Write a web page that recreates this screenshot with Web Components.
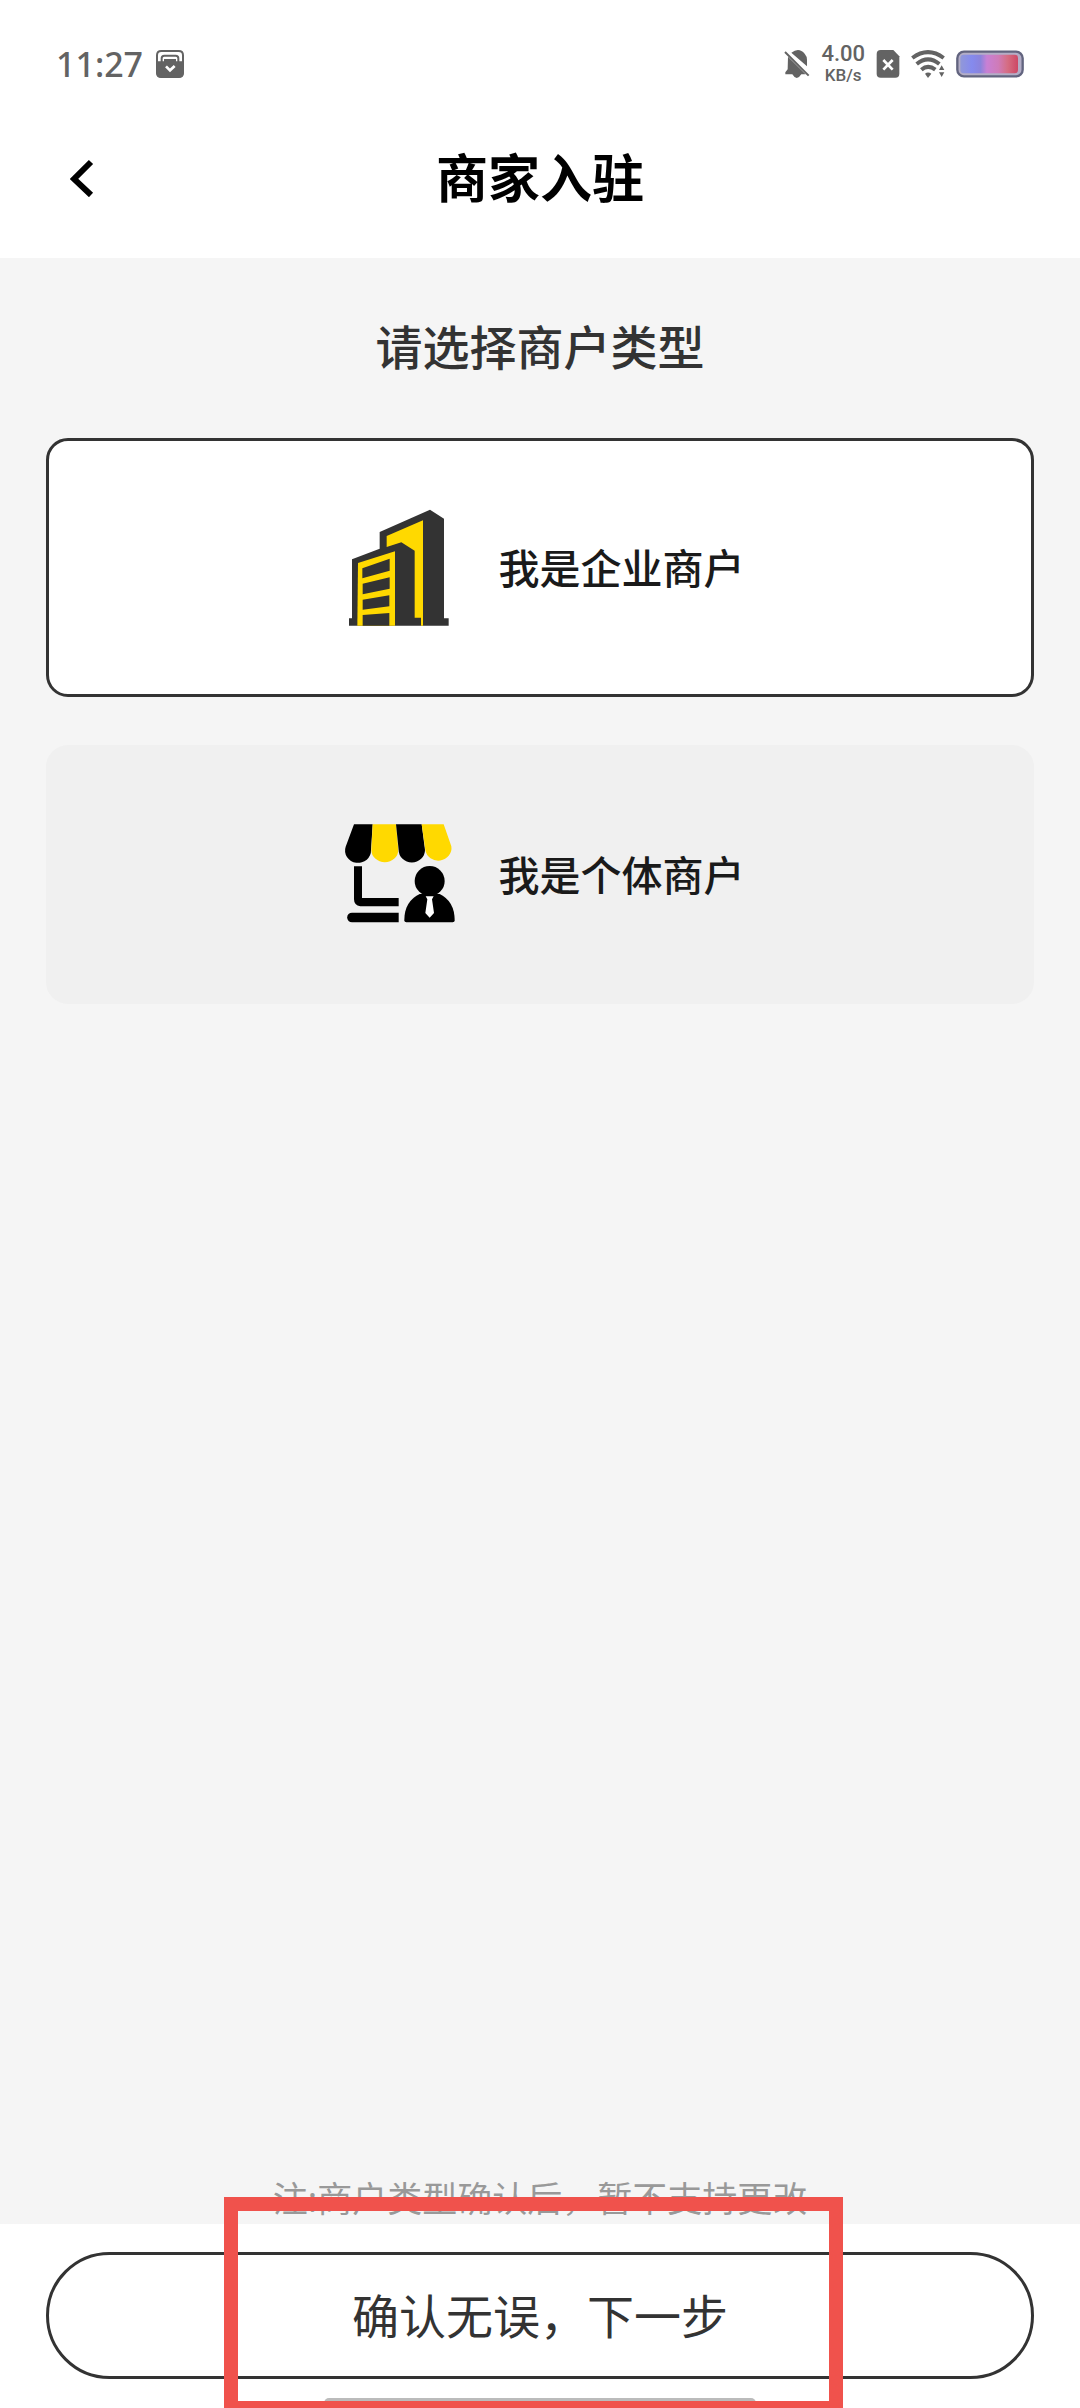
<!DOCTYPE html>
<html lang="zh-CN">
<head>
<meta charset="utf-8">
<meta name="viewport" content="width=device-width, initial-scale=1">
<title>商家入驻</title>
<style>
  body {
    margin: 0;
    font-family: "Noto Sans", "Noto Sans CJK SC", sans-serif;
    color: #333;
    background-color: #fff;
  }
</style>
</head>
<body>
<merchant-application></merchant-application>

<script>
/**
 * The status-bar web component.
 */
const statusTemplate = document.createElement('template')
statusTemplate.innerHTML = `
  <style>
    :host {
      display: flex;
      align-items: center;
      justify-content: space-between;
      box-sizing: border-box;
      height: 128px;
      padding: 0 56px;
      color: #636363;
      font-weight: 500;
    }
    .group {
      display: flex;
      align-items: center;
      gap: 11px;
    }
    .time {
      font-size: 34px;
      line-height: 40px;
      margin-right: 2px;
    }
    .speed {
      display: grid;
      justify-items: center;
      font-family: Roboto, sans-serif;
      font-size: 22px;
      line-height: 22px;
      font-weight: 500;
    }
    .speed small {
      font-size: 17px;
      line-height: 20px;
    }
    svg {
      display: block;
      fill: currentColor;
    }
  </style>
  <div class="group">
    <span class="time">11:27</span>
    <svg width="28" height="28" viewBox="0 0 84 84" aria-hidden="true">
      <path d="M16 3H68Q81 3 81 16V70Q81 81 68 81H16Q3 81 3 70V16Q3 3 16 3Z" fill="none" stroke="currentColor" stroke-width="6"/>
      <path d="M17 36V25Q17 17 25 17H59Q67 17 67 25V36" fill="none" stroke="currentColor" stroke-width="6"/>
      <path d="M2 34H24V27H60V34H82V70Q82 83 69 83H15Q2 83 2 70Z"/>
      <path d="M30 49L42 61L56 48" fill="none" stroke="#fff" stroke-width="8"/>
    </svg>
  </div>
  <div class="group">
    <svg width="26" height="30" viewBox="47 56 78 90" aria-hidden="true">
      <path d="M69 67Q92 50 109 70Q116 78 116 88V108Z"/>
      <path d="M59 79L112 132H99Q85 154 72 132H51V126L58 117Z"/>
      <path d="M50 65L121 136" stroke="currentColor" stroke-width="6"/>
    </svg>
    <div class="speed"><span>4.00</span><small>KB/s</small></div>
    <svg width="24" height="28" viewBox="322 60 72 84" aria-hidden="true">
      <path d="M336 60H374L392 79V131Q392 143 380 143H336Q324 143 324 131V72Q324 60 336 60Z"/>
      <path d="M344 90L372 119M372 90L344 119" stroke="#fff" stroke-width="8"/>
    </svg>
    <svg width="34" height="30" viewBox="425 58 102 90" aria-hidden="true">
      <g fill="none" stroke="currentColor" stroke-width="12">
        <path d="M429 85Q476 50 523 85"/>
        <path d="M442 103Q476 75 510 103"/>
        <path d="M456 120Q476 103 498 120"/>
      </g>
      <path d="M467 132Q476 125 486 132L476 145Z"/>
      <path d="M509 121L517 107L525 121ZM509 128H525L517 142Z"/>
    </svg>
    <svg width="68" height="28" viewBox="557 60 204 84" aria-hidden="true">
      <defs>
        <linearGradient id="charge">
          <stop offset="0" stop-color="#9198d8"/>
          <stop offset=".2" stop-color="#858aee"/>
          <stop offset=".35" stop-color="#8b83dc"/>
          <stop offset=".46" stop-color="#c880d4"/>
          <stop offset=".66" stop-color="#cf7bb8"/>
          <stop offset=".82" stop-color="#d56d82"/>
          <stop offset="1" stop-color="#cd4765"/>
        </linearGradient>
      </defs>
      <rect x="561" y="65" width="196" height="74" rx="20" fill="#b3adc6" stroke="#62647f" stroke-width="7"/>
      <rect x="570" y="74" width="173" height="56" rx="10" fill="url(#charge)"/>
    </svg>
  </div>
`

customElements.define('status-bar',
  /**
   * Represents the status bar of the phone.
   */
  class extends HTMLElement {
    /**
     * Creates an instance of the current type.
     */
    constructor() {
      super()

      this.attachShadow({ mode: 'open' })
        .appendChild(statusTemplate.content.cloneNode(true))
    }
  }
)

/**
 * The nav-header web component.
 */
const headerTemplate = document.createElement('template')
headerTemplate.innerHTML = `
  <style>
    :host {
      display: block;
      padding: 0 46px 30px;
      color: #000;
    }
    header {
      display: grid;
      grid-template-columns: 72px 1fr 72px;
      align-items: center;
      height: 100px;
    }
    button {
      display: flex;
      align-items: center;
      height: 72px;
      padding: 0 0 0 24px;
      border: 0;
      background: none;
      color: inherit;
      cursor: pointer;
    }
    h1 {
      margin: 0;
      font-size: 52px;
      line-height: 72px;
      font-weight: 700;
      text-align: center;
    }
  </style>
  <header>
    <button type="button" aria-label="返回">
      <svg width="24" height="38" viewBox="0 0 24 38" fill="none" stroke="currentColor" stroke-width="6" aria-hidden="true">
        <path d="M21 3L4 20L21 36"/>
      </svg>
    </button>
    <h1><slot></slot></h1>
  </header>
`

customElements.define('nav-header',
  /**
   * Represents the page header with a back button.
   */
  class extends HTMLElement {
    /**
     * Creates an instance of the current type.
     */
    constructor() {
      super()

      this.attachShadow({ mode: 'open' })
        .appendChild(headerTemplate.content.cloneNode(true))

      this.shadowRoot.querySelector('button')
        .addEventListener('click', () => window.history.back())
    }
  }
)

/**
 * The merchant-icon web component.
 */
const icons = {
  company: `
    <svg viewBox="18 40 384 384" aria-hidden="true">
      <path fill="#333" d="M57 405V383H66V206L149 174V124L300 57L342 84V383H356V405Z"/>
      <path fill="#ffd900" d="M170 136L279 89V405H273V381H254V180L214 155L170 169Z"/>
      <path fill="#ffd900" d="M84 217L195 182V405H82Z"/>
      <path fill="#333" d="M97 233L179 204V240L97 263ZM98 279L179 260V294L98 311ZM98 327L178 314V347L98 357ZM98 373L178 367V405H98Z"/>
    </svg>`,
  personal: `
    <svg viewBox="18 32 384 384" aria-hidden="true">
      <path d="M72 72H128L123 149A39 37 0 1 1 47 139Z"/>
      <path fill="#ffd900" d="M128 72H198L205 148A40 37 0 0 1 124 148Z"/>
      <path d="M198 72H275L285 149A39 37 0 0 1 206 149Z"/>
      <path fill="#ffd900" d="M275 72H341L364 138A39 37 0 1 1 286 149Z"/>
      <path d="M72 198H96V293H206V318H91Q72 315 72 297Z"/>
      <path d="M66 337H206V366H66A14 14 0 0 1 66 337Z"/>
      <circle cx="299" cy="242" r="45"/>
      <path d="M269 281H329Q374 303 374 360Q374 366 368 366H229Q223 366 223 360Q223 303 269 281Z"/>
      <path fill="#fff" d="M287 288H311L306 297L312 338L299 352L286 338L292 297Z"/>
    </svg>`
}

customElements.define('merchant-icon',
  /**
   * Represents the icon of a merchant type.
   */
  class extends HTMLElement {
    /**
     * Creates an instance of the current type.
     */
    constructor() {
      super()

      this.attachShadow({ mode: 'open' })
    }

    /**
     * Called after the element is inserted into the DOM.
     */
    connectedCallback() {
      this.shadowRoot.innerHTML = `
        <style>
          :host {
            display: block;
            width: 128px;
            height: 128px;
          }
          svg {
            display: block;
          }
        </style>
        ${icons[this.getAttribute('name')]}
      `
    }
  }
)

/**
 * The merchant-picker web component.
 */
const pickerTemplate = document.createElement('template')
pickerTemplate.innerHTML = `
  <style>
    :host {
      display: block;
    }
    h2 {
      margin: 0 0 56px;
      font-size: 47px;
      line-height: 70px;
      font-weight: 500;
      text-align: center;
    }
    .options {
      display: grid;
      gap: 48px;
    }
    label {
      position: relative;
      display: flex;
      align-items: center;
      justify-content: center;
      gap: 35px;
      box-sizing: border-box;
      min-height: 259px;
      padding: 48px 20px;
      border: 3px solid transparent;
      border-radius: 22px;
      background-color: #f0f0f0;
      color: #1a1a1a;
      font-size: 41px;
      line-height: 60px;
      font-weight: 500;
      cursor: pointer;
    }
    label:has(input:checked) {
      border-color: #333;
      background-color: #fff;
    }
    input {
      position: absolute;
      inset: 0;
      width: 100%;
      height: 100%;
      margin: 0;
      opacity: 0;
      cursor: pointer;
    }
  </style>
  <h2 id="heading"><slot></slot></h2>
  <div class="options" role="radiogroup" aria-labelledby="heading">
    <label>
      <input type="radio" name="merchant" value="company" checked>
      <merchant-icon name="company"></merchant-icon>
      <span>我是企业商户</span>
    </label>
    <label>
      <input type="radio" name="merchant" value="personal">
      <merchant-icon name="personal"></merchant-icon>
      <span>我是个体商户</span>
    </label>
  </div>
`

customElements.define('merchant-picker',
  /**
   * Represents the choice of merchant type.
   */
  class extends HTMLElement {
    /**
     * Creates an instance of the current type.
     */
    constructor() {
      super()

      this.attachShadow({ mode: 'open' })
        .appendChild(pickerTemplate.content.cloneNode(true))
    }

    /**
     * The chosen merchant type.
     *
     * @returns {string} The value of the checked option.
     */
    get value() {
      return this.shadowRoot.querySelector('input:checked').value
    }
  }
)

/**
 * The action-footer web component.
 */
const footerTemplate = document.createElement('template')
footerTemplate.innerHTML = `
  <style>
    :host {
      position: relative;
      display: flex;
      flex-direction: column;
      gap: 19px;
      padding: 28px 46px 0;
      background-color: #fff;
    }
    button {
      height: 127px;
      border: 3px solid #333;
      border-radius: 64px;
      background-color: #fff;
      color: #333;
      font: inherit;
      font-size: 47px;
      line-height: 70px;
      cursor: pointer;
    }
    .indicator {
      align-self: center;
      width: 432px;
      height: 10px;
      border-radius: 5px;
      background-color: #bbb;
    }
    /* Marks the button, and runs out below the screen edge */
    .marker {
      position: absolute;
      top: -27px;
      right: 237px;
      bottom: -7px;
      left: 224px;
      border: 14px solid #f0524c;
      pointer-events: none;
    }
  </style>
  <button type="button"><slot></slot></button>
  <div class="indicator"></div>
  <div class="marker"></div>
`

customElements.define('action-footer',
  /**
   * Represents the footer with the confirm button.
   */
  class extends HTMLElement {
    /**
     * Creates an instance of the current type.
     */
    constructor() {
      super()

      this.attachShadow({ mode: 'open' })
        .appendChild(footerTemplate.content.cloneNode(true))

      this.shadowRoot.querySelector('button').addEventListener('click', () => {
        this.dispatchEvent(new window.CustomEvent('confirm', { bubbles: true }))
      })
    }
  }
)

/**
 * The merchant-application web component.
 */
const template = document.createElement('template')
template.innerHTML = `
  <style>
    :host {
      display: flex;
      flex-direction: column;
      min-height: 100vh;
      overflow: hidden;
    }
    main {
      flex: 1;
      display: flex;
      flex-direction: column;
      justify-content: space-between;
      padding: 54px 46px 0;
      background-color: #f5f5f5;
    }
    .note {
      margin: 48px 0 0;
      color: #999;
      font-size: 35px;
      line-height: 50px;
      text-align: center;
    }
  </style>
  <status-bar></status-bar>
  <nav-header>商家入驻</nav-header>
  <main>
    <merchant-picker>请选择商户类型</merchant-picker>
    <p class="note">注:商户类型确认后，暂不支持更改</p>
  </main>
  <action-footer>确认无误，下一步</action-footer>
`

customElements.define('merchant-application',
  /**
   * Represents the merchant application page.
   */
  class extends HTMLElement {
    /**
     * Creates an instance of the current type.
     */
    constructor() {
      super()

      this.attachShadow({ mode: 'open' })
        .appendChild(template.content.cloneNode(true))

      // Pass on the chosen type when the user confirms.
      this.shadowRoot.querySelector('action-footer').addEventListener('confirm', () => {
        const merchant = this.shadowRoot.querySelector('merchant-picker').value
        this.dispatchEvent(new window.CustomEvent('merchant', { detail: merchant, bubbles: true }))
      })
    }
  }
)
</script>
</body>
</html>
